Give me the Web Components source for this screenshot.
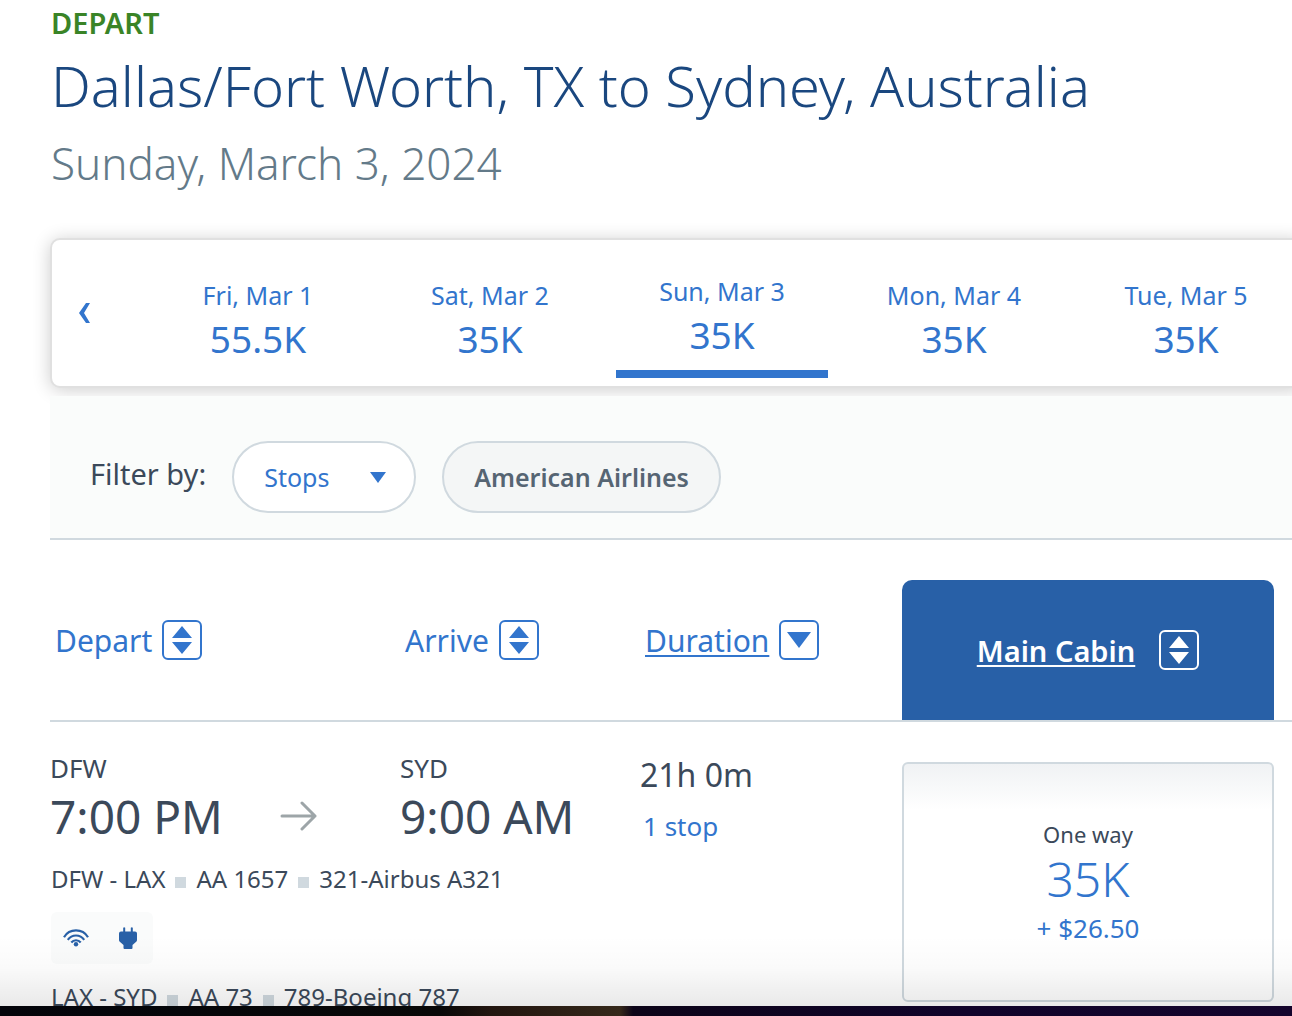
<!DOCTYPE html>
<html lang="en">
<head>
<meta charset="utf-8">
<title>Choose flights</title>
<style>
  html, body { height: 100%; }
  body {
    margin: 0;
    background: #fff;
    font-family: "Noto Sans", "Open Sans", sans-serif;
    color: #3b495a;
    --link: #3275cd;
    --line: #d0d9df;
    --brand: #2860a7;
    --cols: 350fr 240fr 262fr 372fr;
  }
</style>
</head>
<body>
<flight-results></flight-results>

<script>
const define = (name, html) => {
  const tpl = document.createElement('template');
  tpl.innerHTML = html;
  customElements.define(name, class extends HTMLElement {
    connectedCallback() {
      if (this.shadowRoot) return;
      this.attachShadow({ mode: 'open' }).append(tpl.content.cloneNode(true));
    }
  });
};

define('trip-heading', `
  <style>
    :host { display: block; padding-left: 51px; margin-bottom: 44px; }
    p, h1 { margin: 0; }
    .leg { font-size: 29px; line-height: 46px; font-weight: 600; color: #3a8427; }
    h1 { font-size: 56px; line-height: 78px; font-weight: 300; color: #1a477f; white-space: nowrap; }
    .date { margin-top: 8px; font-size: 44px; line-height: 62px; font-weight: 300; color: #637a89; }
  </style>
  <p class="leg"><slot name="leg"></slot></p>
  <h1><slot></slot></h1>
  <p class="date"><slot name="date"></slot></p>`);

define('date-tab', `
  <style>
    :host { display: block; padding: 0 10px; }
    button {
      display: block; width: 100%; padding: 37px 0 0; border: 0; background: none;
      font: inherit; color: var(--link); text-align: center; white-space: nowrap; cursor: pointer;
    }
    span { display: block; }
    .day { font-size: 25px; line-height: 36px; }
    .price { font-size: 37px; line-height: 52px; }
    :host([selected]) button { padding-top: 33px; }
    :host([selected]) button::after { content: ""; display: block; height: 8px; margin-top: 9px; background: var(--link); }
  </style>
  <button type="button"><span class="day"><slot></slot></span><span class="price"><slot name="price"></slot></span></button>`);

define('date-carousel', `
  <style>
    :host {
      display: grid; grid-template-columns: 90px repeat(5, 1fr);
      min-height: 146px; margin: 0 -12px 8px 50px;
      border: 2px solid #e0e0e0; border-radius: 10px; background: #fff;
      box-shadow: 0 2px 18px rgba(0, 0, 0, .2);
    }
    .prev { border: 0; padding: 0 0 0 27px; background: none; text-align: left; cursor: pointer; }
    svg { display: block; width: 11px; height: 20px; fill: var(--link); }
  </style>
  <button class="prev" type="button" aria-label="Previous dates">
    <svg viewBox="0 0 11 20"><path d="M7 0h4L5 10l6 10H7L0 10z"/></svg>
  </button>
  <slot></slot>`);

define('filter-bar', `
  <style>
    :host {
      display: flex; align-items: flex-start; gap: 26px;
      margin-left: 50px; padding: 45px 0 25px 40px;
      background: #fafcfb; border-bottom: 2px solid var(--line);
    }
    label { font-size: 29px; line-height: 66px; }
    .pick { display: grid; align-items: center; }
    .pick > * { grid-area: 1 / 1; }
    select, button {
      box-sizing: border-box; height: 72px; border: 2px solid var(--line); border-radius: 36px;
      font-family: inherit; font-size: 25px;
    }
    select { appearance: none; width: 184px; padding: 0 60px 0 30px; background: #fff; color: var(--link); }
    svg { justify-self: end; margin-right: 30px; width: 16px; height: 11px; fill: var(--link); pointer-events: none; }
    button { padding: 0 30px; background: #f4f6f6; color: #566573; font-weight: 600; }
  </style>
  <label for="stops">Filter by:</label>
  <span class="pick">
    <select id="stops"><option>Stops</option></select>
    <svg viewBox="0 0 16 11"><path d="M0 0h16L8 11z"/></svg>
  </span>
  <button type="button">American Airlines</button>`);

define('sort-button', `
  <style>
    :host { display: flex; padding: 40px 0 0 5px; }
    button {
      display: flex; align-items: center; gap: 10px; height: 40px; padding: 0; border: 0; background: none;
      font: inherit; font-size: 30px; color: var(--link); cursor: pointer; white-space: nowrap;
    }
    svg { width: 40px; height: 40px; }
    rect { fill: none; stroke: currentColor; stroke-width: 2; }
    path { fill: currentColor; }
    .down { display: none; }
    :host([active]) .text { text-decoration: underline 2px; text-underline-offset: 3px; }
    :host([down]) .both { display: none; }
    :host([down]) .down { display: inline; }
    :host([cabin]) {
      justify-content: center; align-items: center; min-height: 140px; padding: 0;
      border-radius: 10px 10px 0 0; background: var(--brand);
    }
    :host([cabin]) button { gap: 24px; color: #fff; font-size: 29px; font-weight: 600; }
  </style>
  <button type="button">
    <span class="text"><slot></slot></span>
    <svg viewBox="0 0 40 40" aria-hidden="true">
      <rect x="1" y="1" width="38" height="38" rx="5"/>
      <path class="both" d="M10 18L20 6l10 12zM10 22h20L20 34z"/>
      <path class="down" d="M8 12h24L20 28z"/>
    </svg>
  </button>`);

define('sort-header', `
  <style>
    :host {
      display: grid; grid-template-columns: var(--cols);
      margin-left: 50px; padding: 40px 18px 0 0; border-bottom: 2px solid var(--line);
    }
  </style>
  <slot></slot>`);

define('airport-time', `
  <style>
    :host { display: block; white-space: nowrap; }
    span { display: block; }
    .code { font-size: 26px; line-height: 34px; }
    .time { font-size: 46px; line-height: 62px; }
  </style>
  <span class="code"><slot name="code"></slot></span>
  <span class="time"><slot></slot></span>`);

define('flight-segment', `
  <style>
    :host { display: flex; align-items: baseline; gap: 10px; font-size: 24px; line-height: 36px; white-space: nowrap; }
    i { width: 11px; height: 11px; background: var(--line); }
  </style>
  <slot name="route"></slot><i></i><slot name="number"></slot><i></i><slot name="plane"></slot>`);

define('amenity-list', `
  <style>
    :host { display: flex; align-items: center; align-self: flex-start; gap: 26px; height: 52px; padding: 0 12px; border-radius: 6px; background: #fafbfb; }
    svg { width: 26px; height: 26px; color: var(--brand); }
  </style>
  <svg viewBox="0 0 26 26" role="img" aria-label="Wi-Fi" fill="none" stroke="currentColor" stroke-width="2.2">
    <path d="M1 12.200A14 14 0 0 1 25 12.200M4.800 14.800A10 10 0 0 1 21.200 14.800M8.300 17.500A6 6 0 0 1 17.700 17.500"/>
    <circle cx="13" cy="19.200" r="2.200" fill="currentColor" stroke="none"/>
  </svg>
  <svg viewBox="0 0 26 26" role="img" aria-label="Power outlet" fill="currentColor">
    <path d="M8.200 2.800q1-1.200 2 0V6.500h5.600V2.800q1-1.200 2 0V6.500H20q2 0 2 2V15q0 1-.8 1.700L17.500 20v3q0 1-1 1h-7q-1 0-1-1v-3l-3.700-3.300Q4 16 4 15V8.500q0-2 2-2h2.200z"/>
  </svg>`);

define('fare-card', `
  <style>
    :host { display: block; }
    button {
      display: flex; flex-direction: column; align-items: center; justify-content: center;
      box-sizing: border-box; width: 100%; min-height: 240px; padding: 2px 0 0;
      border: 2px solid var(--line); border-radius: 6px;
      background: linear-gradient(#f0f2f4, #fff 46px);
      font: inherit; color: var(--link); cursor: pointer;
    }
    .type { font-size: 22px; line-height: 30px; color: #3b495a; }
    .miles { font-size: 48px; line-height: 60px; font-weight: 300; }
    .tax { font-size: 26px; line-height: 38px; }
  </style>
  <button type="button">
    <span class="type"><slot name="type"></slot></span>
    <span class="miles"><slot></slot></span>
    <span class="tax"><slot name="tax"></slot></span>
  </button>`);

define('flight-row', `
  <style>
    :host {
      display: grid; grid-template-columns: var(--cols); grid-template-rows: auto 1fr;
      margin-left: 50px; padding: 29px 18px 0 0;
    }
    .from { display: flex; align-items: flex-end; gap: 57px; }
    .from svg { width: 37px; height: 62px; fill: none; stroke: #9da5a8; stroke-width: 3; stroke-linecap: round; stroke-linejoin: round; }
    .segments { grid-area: 2 / 1 / 3 / 3; display: flex; flex-direction: column; gap: 15px; padding: 14px 0 0 1px; }
    .length { grid-area: 1 / 3 / 3 / 4; }
    .total { display: block; font-size: 32px; line-height: 48px; }
    a { font-size: 26px; line-height: 54px; margin-left: 3px; color: var(--link); text-decoration: none; }
    .fare { grid-area: 1 / 4 / 3 / 5; padding-top: 11px; }
  </style>
  <div class="from">
    <slot name="from"></slot>
    <svg viewBox="0 0 37 62" aria-hidden="true"><path d="M2 31h33M22 18l13 13-13 13"/></svg>
  </div>
  <slot name="to"></slot>
  <div class="length"><span class="total"><slot name="total"></slot></span><a href="#stops"><slot name="stops"></slot></a></div>
  <div class="fare"><slot name="fare"></slot></div>
  <div class="segments"><slot></slot></div>`);

define('flight-results', `
  <style>
    :host { display: flex; flex-direction: column; height: 100vh; overflow: hidden; }
    main { position: relative; flex: 1; min-height: 0; overflow: hidden; }
    main::after {
      content: ""; position: absolute; inset: auto 0 0 0; height: 70px; pointer-events: none;
      background: linear-gradient(rgba(0,0,0,0), rgba(0,0,0,.02) 45%, rgba(0,0,0,.085));
    }
    footer { height: 10px; background: linear-gradient(90deg, #03040a, #080808 34%, #22150f 38%, #35281a 48%, #0c0418 49%, #10032a 75%, #14042c); }
  </style>
  <main>
    <trip-heading><span slot="leg">DEPART</span>Dallas/Fort Worth, TX to Sydney, Australia<span slot="date">Sunday, March 3, 2024</span></trip-heading>
    <date-carousel>
      <date-tab>Fri, Mar 1<span slot="price">55.5K</span></date-tab>
      <date-tab>Sat, Mar 2<span slot="price">35K</span></date-tab>
      <date-tab selected>Sun, Mar 3<span slot="price">35K</span></date-tab>
      <date-tab>Mon, Mar 4<span slot="price">35K</span></date-tab>
      <date-tab>Tue, Mar 5<span slot="price">35K</span></date-tab>
    </date-carousel>
    <filter-bar></filter-bar>
    <sort-header>
      <sort-button>Depart</sort-button>
      <sort-button>Arrive</sort-button>
      <sort-button active down>Duration</sort-button>
      <sort-button active cabin>Main Cabin</sort-button>
    </sort-header>
    <flight-row>
      <airport-time slot="from"><span slot="code">DFW</span>7:00 PM</airport-time>
      <airport-time slot="to"><span slot="code">SYD</span>9:00 AM</airport-time>
      <span slot="total">21h 0m</span>
      <span slot="stops">1 stop</span>
      <fare-card slot="fare"><span slot="type">One way</span>35K<span slot="tax">+ $26.50</span></fare-card>
      <flight-segment><span slot="route">DFW - LAX</span><span slot="number">AA 1657</span><span slot="plane">321-Airbus A321</span></flight-segment>
      <amenity-list></amenity-list>
      <flight-segment><span slot="route">LAX - SYD</span><span slot="number">AA 73</span><span slot="plane">789-Boeing 787</span></flight-segment>
    </flight-row>
  </main>
  <footer></footer>`);
</script>
</body>
</html>
